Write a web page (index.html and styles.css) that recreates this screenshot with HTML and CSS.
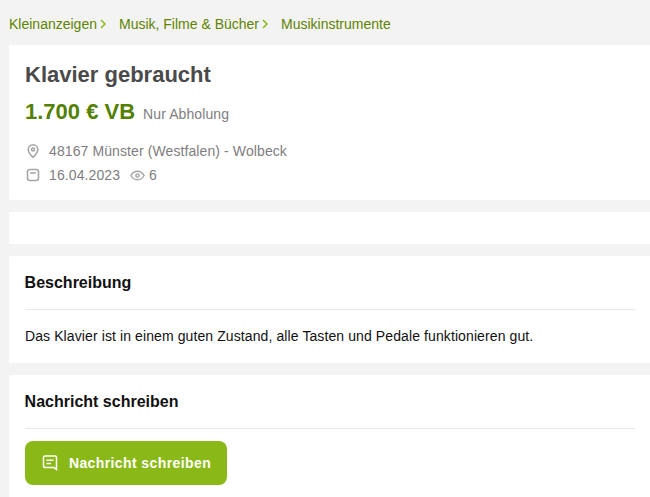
FILE: index.html
```html
<!DOCTYPE html>
<html lang="de">
<head>
    <meta charset="UTF-8">
    <meta name="viewport" content="width=device-width, initial-scale=1.0">
    <title>Klavier gebraucht</title>
    <link rel="stylesheet" href="styles.css">
</head>
<body>
    <nav class="breadcrumb">
        <a href="#">Kleinanzeigen</a>
        <svg class="crumb-arrow" viewBox="0 0 6 10"><path d="M1 1l4 4-4 4"/></svg>
        <a href="#">Musik, Filme &amp; Bücher</a>
        <svg class="crumb-arrow" viewBox="0 0 6 10"><path d="M1 1l4 4-4 4"/></svg>
        <a href="#">Musikinstrumente</a>
    </nav>

    <section class="card summary">
        <h1>Klavier gebraucht</h1>
        <div class="price-row">
            <span class="price">1.700 € VB</span>
            <span class="pickup">Nur Abholung</span>
        </div>
        <div class="meta-row location">
            <svg class="icon" viewBox="0 0 14 14"><path d="M7 .8a4.800 4.800 0 0 0-4.800 4.800C2.200 8.800 7 13.400 7 13.400s4.800-4.600 4.800-7.800A4.800 4.800 0 0 0 7 .8z"/><circle cx="7" cy="5.500" r="1.500"/></svg>
            <span>48167 Münster (Westfalen) - Wolbeck</span>
        </div>
        <div class="meta-row">
            <svg class="icon" viewBox="0 0 14 14"><rect x="1.500" y="1.500" width="11" height="11" rx="2.200"/><path d="M4.200 5h5.600"/></svg>
            <span>16.04.2023</span>
            <svg class="icon-eye" viewBox="0 0 14 10"><path d="M.8 5C2.300 2.400 4.400 1 7 1S11.700 2.400 13.200 5C11.700 7.600 9.600 9 7 9S2.300 7.600.8 5z"/><circle cx="7" cy="5" r="1.500"/></svg>
            <span>6</span>
        </div>
    </section>

    <section class="card spacer"></section>

    <section class="card">
        <h2>Beschreibung</h2>
        <p>Das Klavier ist in einem guten Zustand, alle Tasten und Pedale funktionieren gut.</p>
    </section>

    <section class="card last">
        <h2>Nachricht schreiben</h2>
        <button class="button">
            <svg class="icon-msg" viewBox="0 0 16 16"><path d="M3 1h10a1.500 1.500 0 0 1 1.500 1.500v12L12 12.600H3a1.500 1.500 0 0 1-1.500-1.500V2.500A1.500 1.500 0 0 1 3 1z"/><path d="M4.500 5.200h7M4.500 8.400h4.500"/></svg>
            Nachricht schreiben
        </button>
    </section>
</body>
</html>
```

FILE: styles.css
```css
html {
    overflow: hidden;
}

body {
    font-family: "Liberation Sans", Arial, sans-serif;
    background-color: #f3f3f3;
    color: #111;
    margin: 0;
    padding-left: 9px;
    font-size: 14px;
}

.breadcrumb {
    display: flex;
    align-items: center;
    height: 45px;
    padding-top: 2px;
    box-sizing: border-box;
}

.breadcrumb a {
    color: #5e8400;
    text-decoration: none;
}

.crumb-arrow {
    width: 6px;
    height: 10px;
    margin: 0 13px 0 3px;
    fill: none;
    stroke: #86b817;
    stroke-width: 1.500;
}

.card {
    background-color: white;
    margin-bottom: 12px;
    padding: 0 15px 0 16px;
    border-radius: 2px 0 0 2px;
}

.summary {
    height: 155px;
    box-sizing: border-box;
    padding-top: 17px;
}

.spacer {
    height: 32px;
}

.last {
    padding-bottom: 16px;
}

h1 {
    font-size: 22px;
    line-height: 26px;
    margin: 0;
    color: #4b4a4a;
}

.price-row {
    display: flex;
    align-items: baseline;
    margin-top: 11px;
    height: 28px;
}

.price {
    font-size: 22px;
    font-weight: bold;
    color: #548000;
}

.pickup {
    color: #807d80;
    margin-left: 8px;
    letter-spacing: 0.1px;
}

.meta-row {
    display: flex;
    align-items: center;
    height: 24px;
    color: #807d80;
    letter-spacing: 0.1px;
}

.location {
    margin-top: 12px;
}

.icon {
    width: 14px;
    height: 14px;
    margin: 0 9px 0 1px;
    fill: none;
    stroke: #a6a6a6;
    stroke-width: 1.600;
}

.icon-eye {
    width: 15px;
    height: 11px;
    margin: 0 4px 0 10px;
    fill: none;
    stroke: #a6a6a6;
    stroke-width: 1.300;
}

h2 {
    font-size: 16px;
    line-height: 19px;
    margin: 0 0 0 -0.4px;
    padding: 17px 0 17px;
    border-bottom: 1px solid #e8e8e8;
}

p {
    margin: 0;
    padding: 18px 0 18px;
    line-height: 17px;
    letter-spacing: 0.1px;
}

.button {
    display: flex;
    align-items: center;
    justify-content: center;
    width: 202px;
    height: 44px;
    margin-top: 12px;
    padding: 0 0 0 1px;
    background-color: #8ab917;
    color: white;
    font-family: inherit;
    font-size: 14px;
    font-weight: bold;
    letter-spacing: 0.4px;
    border: none;
    border-radius: 8px;
    cursor: pointer;
}

.icon-msg {
    width: 16px;
    height: 16px;
    margin-right: 11px;
    fill: none;
    stroke: white;
    stroke-width: 1.500;
}
```
